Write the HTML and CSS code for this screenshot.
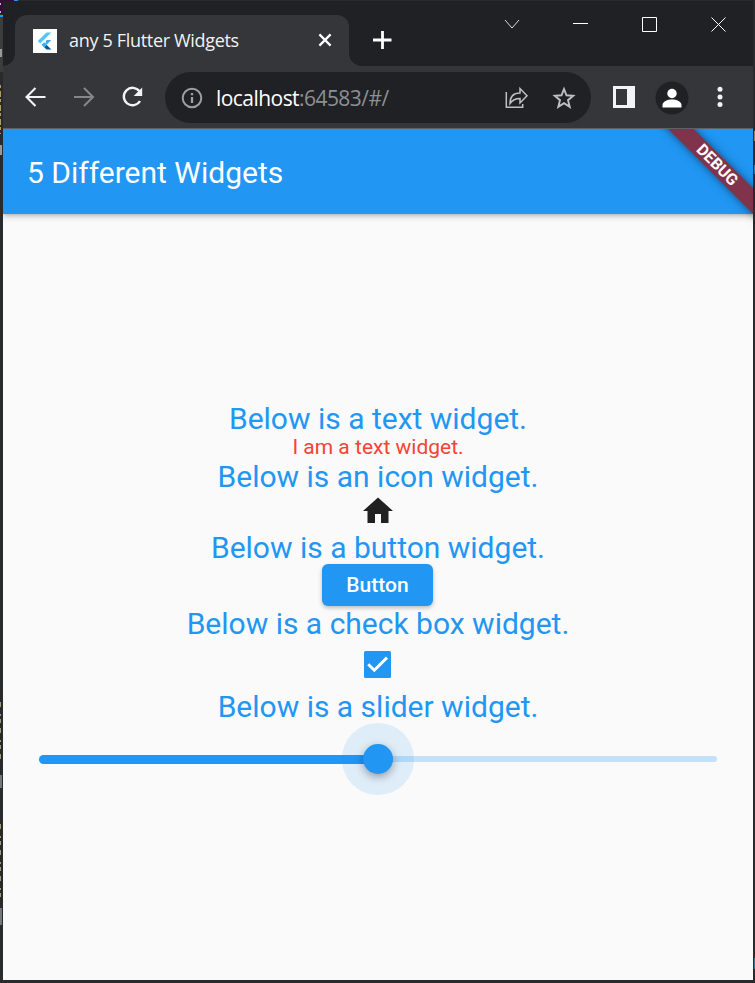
FILE: index.html
```html
<!DOCTYPE html>
<html lang="en">
<head>
<meta charset="utf-8">
<title>any 5 Flutter Widgets</title>
<link rel="stylesheet" href="styles.css">
</head>
<body>
<div class="desktop">
  <svg class="backdrop" width="755" height="983" fill="none">
    <path d="M0 0h14v14H0z" fill="#3b0a3a"/><path d="M14 .5h4" stroke="#2196f3"/>
    <path d="M.5 3v2M.5 11v2" stroke="#bbb"/><path d="M0 16h3" stroke="#2196f3" stroke-width="2"/>
    <path d="M0 17h3v55H0z" fill="#3b3c3e"/><path d="M1 49v8" stroke="#999" stroke-width="2"/>
    <path d="M.5 85v49" stroke="#b59c5f" stroke-dasharray="3 3 6 2"/><path d="M1 145v10" stroke="#999" stroke-width="2"/>
    <path d="M.5 702v62M.5 824v76" stroke="#9b9a70" stroke-dasharray="5 7 2 3 4 5"/><path d="M1 775v13M1 908v17" stroke="#73787a" stroke-width="2"/>
    <path d="M754.5 131v10" stroke="#a5834c"/><path d="M754.5 165v9M754.5 958v11" stroke="#367899"/>
  </svg>
  <main class="window">
    <header class="tabs">
      <div class="tab">
        <svg class="favicon" width="24" height="24" viewBox="0 0 24 24"><path fill="#fff" d="M0 0h24v24H0z"/><path fill="#54c5f8" d="M13.5 3.5h4.8L7.2 14.5 4.8 12z"/><path fill="#42a5f5" d="M13.5 11h4.8l-4.8 4.8-2.4-2.4-2.4 2.4 2.4 2.4z"/><path fill="#01579b" d="M11.2 18.2l2.3-2.4 4.8 4.8h-4.8z"/><path fill="#29b6f6" d="M8.8 15.8l2.4-2.4 2.3 2.4-2.3 2.4z"/></svg>
        <span class="tab-title">any 5 Flutter Widgets</span>
        <svg class="tab-close" width="14" height="14" viewBox="0 0 14 14"><path d="M1.4 1.4l11.2 11.2M12.6 1.4L1.4 12.6" stroke="#fff" stroke-width="2.2"/></svg>
      </div>
      <svg class="new-tab" width="20" height="20" viewBox="0 0 20 20"><path d="M10.500 1v18M1 10h18.500" stroke="#fff" stroke-width="2.8"/></svg>
      <svg class="controls" width="224" height="17" viewBox="0 0 224 17" fill="none" stroke="#fff"><path d="M1 4l7 8 7-8" stroke="#ddd"/><path d="M69 7.5h15M138.5 1.5h14v14h-14zM207.5 1.5l14 14M221.5 1.5l-14 14"/></svg>
    </header>
    <nav class="toolbar">
      <svg class="nav-icons" width="122" height="24" viewBox="0 0 122 24" fill="none" stroke-width="2.1"><path d="M20.500 12H2M10.500 3L1.500 12l9 9" stroke="#f1f3f4"/><path d="M49 12h18.500M59 3l9 9-9 9" stroke="#84868a"/><path d="M114.500 6.300A8.700 8.700 0 1 0 115 16" stroke="#f1f3f4" stroke-width="2.400"/><path d="M117.200 2.500v8.500h-8.500z" fill="#f1f3f4"/></svg>
      <div class="omnibox">
        <svg width="22" height="22" viewBox="0 0 22 22" fill="none" stroke="#9aa0a6" stroke-width="2"><circle cx="11" cy="11" r="9.300"/><path d="M11 10v6M11 6v2.200" stroke-width="2.300"/></svg>
        <span class="url">localhost<span class="url-rest">:64583/#/</span></span>
        <svg class="page-actions" width="72" height="24" viewBox="0 0 72 24" fill="none" stroke="#bdc1c6" stroke-width="1.500"><path d="M2.300 6v15.300h16.400V18"/><path d="M6 17.500c0-7 4-10.500 10-10.500V2.500l7 7.200-7 7.200v-4.500c-4.500 0-7.500 1.300-10 5.100z"/><path stroke-width="1.900" d="M60 3l2.500 6.300 6.700.5-5.200 4.400 1.700 6.600-5.700-3.600-5.700 3.600 1.700-6.600-5.200-4.400 6.700-.5z"/></svg>
      </div>
      <svg class="panel" width="22" height="22" viewBox="0 0 22 22"><path fill="#f1f3f4" fill-rule="evenodd" d="M0 0h22v22H0zM3 3v16h11V3z"/></svg>
      <svg class="profile" width="34" height="34" viewBox="0 0 34 34"><circle cx="17" cy="17" r="16.500" fill="#202124"/><circle cx="17" cy="12.500" r="4.700" fill="#fff"/><path fill="#fff" d="M7.500 26.500v-2.500c0-3.500 5-5.500 9.500-5.500s9.500 2 9.500 5.500v2.500z"/></svg>
      <svg class="more" width="6" height="22" viewBox="0 0 6 22" fill="#f1f3f4"><circle cx="3" cy="3.300" r="2.500"/><circle cx="3" cy="11" r="2.500"/><circle cx="3" cy="18.500" r="2.500"/></svg>
    </nav>
    <section class="app">
      <div class="appbar"><h1>5 Different Widgets</h1></div>
      <div class="banner"><span>DEBUG</span></div>
      <div class="column">
        <p class="label">Below is a text widget.</p>
        <p class="sample">I am a text widget.</p>
        <p class="label">Below is an icon widget.</p>
        <svg class="home" width="36" height="36" viewBox="0 0 24 24"><path fill="#212121" d="M10 20v-6h4v6h5v-8h3L12 3 2 12h3v8z"/></svg>
        <p class="label">Below is a button widget.</p>
        <button class="button">Button</button>
        <p class="label">Below is a check box widget.</p>
        <div class="check"><svg width="27" height="27" viewBox="0 0 27 27"><rect width="27" height="27" rx="1.500" fill="#2196f3"/><path d="M4.200 13.200l6.100 6.100L23 6.600" fill="none" stroke="#fff" stroke-width="2.900"/></svg></div>
        <p class="label">Below is a slider widget.</p>
        <div class="slider"><div class="active"></div><div class="inactive"></div><div class="thumb"></div></div>
      </div>
    </section>
  </main>
</div>
</body>
</html>
```

FILE: styles.css
```css
* { box-sizing: border-box; }
body, h1, p { margin: 0; }
body { font-family: Roboto, sans-serif; }
svg { display: block; flex: none; }
.desktop { position: relative; width: 755px; height: 983px; padding: 1px 2px 3px 3px; background: #292a2c; overflow: hidden; }
.backdrop { position: absolute; left: 0; top: 0; }
.window { position: relative; width: 750px; height: 979px; background: #202124; }
.tabs { display: flex; height: 65px; padding: 14px 25px 0 12px; background: #202124; }
.tab { position: relative; display: flex; align-items: center; width: 334px; height: 51px; padding: 0 17px 0 18px; border-radius: 12px 12px 0 0; background: #35363a; }
.tab::before, .tab::after { content: ""; position: absolute; bottom: 0; width: 12px; height: 12px; }
.tab::before { left: -12px; background: radial-gradient(circle at 0 0, #202124 11.5px, #35363a 12px); }
.tab::after { right: -12px; background: radial-gradient(circle at 100% 0, #202124 11.5px, #35363a 12px); }
.tab-title { margin: -2px 0 0 12px; color: #f1f3f4; font: 18px/24px "Open Sans", sans-serif; letter-spacing: -.32px; white-space: nowrap; }
.tab-close { margin: -1px 0 0 auto; }
.new-tab { margin: 15px 0 0 23px; }
.controls { margin: 1px 0 0 auto; }
.toolbar { display: flex; align-items: center; height: 63px; padding: 1px 0 0 22px; background: #35363a; border-bottom: 1px solid #606164; }
.nav-icons { margin-top: -1px; }
.omnibox { display: flex; align-items: center; width: 426px; height: 51px; margin-left: 18px; padding: 0 15px 0 16px; border-radius: 26px; background: #202124; }
.url { margin-left: 13px; color: #fff; font: 21px/30px "Open Sans", sans-serif; letter-spacing: -.55px; white-space: nowrap; }
.url-rest { color: #8c8f93; }
.page-actions { margin-left: auto; }
.panel { margin: -1px 0 0 22px; }
.profile { margin-left: 20px; }
.more { margin: -1px 0 0 28px; }
.app { position: relative; height: 851px; background: #fafafa; overflow: hidden; }
.appbar { display: flex; align-items: center; height: 85px; padding: 2px 24px 0; background: #2196f3; color: #fff; box-shadow: 0 3px 6px rgba(0,0,0,.18), 0 1px 3px rgba(0,0,0,.14); }
h1 { font-size: 30px; line-height: 35px; font-weight: 400; letter-spacing: 0; }
.banner { position: absolute; right: -49px; top: 27px; width: 170px; height: 18px; transform: rotate(45deg); background: #80344b; box-shadow: 0 0 9px rgba(0,0,0,.5); color: #fff; font-size: 16px; line-height: 18px; font-weight: 700; text-align: center; }
.column { display: flex; flex-direction: column; align-items: center; padding: 187px 36px 0; }
.label { height: 35px; color: #2196f3; font-size: 30px; line-height: 35px; white-space: nowrap; }
.sample { height: 23px; color: #f44336; font-size: 21px; line-height: 22px; }
.home { margin-top: -1px; }
.home + .label { margin-top: 1px; }
.button { width: 111px; height: 42px; margin: -1px 1px 0 0; padding: 0; border: 0; border-radius: 6px; background: #2196f3; color: #fff; font: 500 21px/42px Roboto, sans-serif; box-shadow: 0 2px 4px rgba(0,0,0,.25); }
.check { display: flex; align-items: center; justify-content: center; width: 48px; height: 48px; padding: 0 1px 2px 0; }
.slider { position: relative; display: flex; align-items: center; width: 678px; height: 72px; margin-top: -1px; }
.active { width: 339px; height: 9px; border-radius: 5px 0 0 5px; background: #2196f3; }
.inactive { width: 339px; height: 6px; border-radius: 0 3px 3px 0; background: #c5e1f8; }
.thumb { position: absolute; left: 324px; top: 21px; width: 30px; height: 30px; border-radius: 50%; background: #2196f3; box-shadow: 0 3px 9px rgba(0,0,0,.35), 0 0 0 21px rgba(33,150,243,.12); }
```
